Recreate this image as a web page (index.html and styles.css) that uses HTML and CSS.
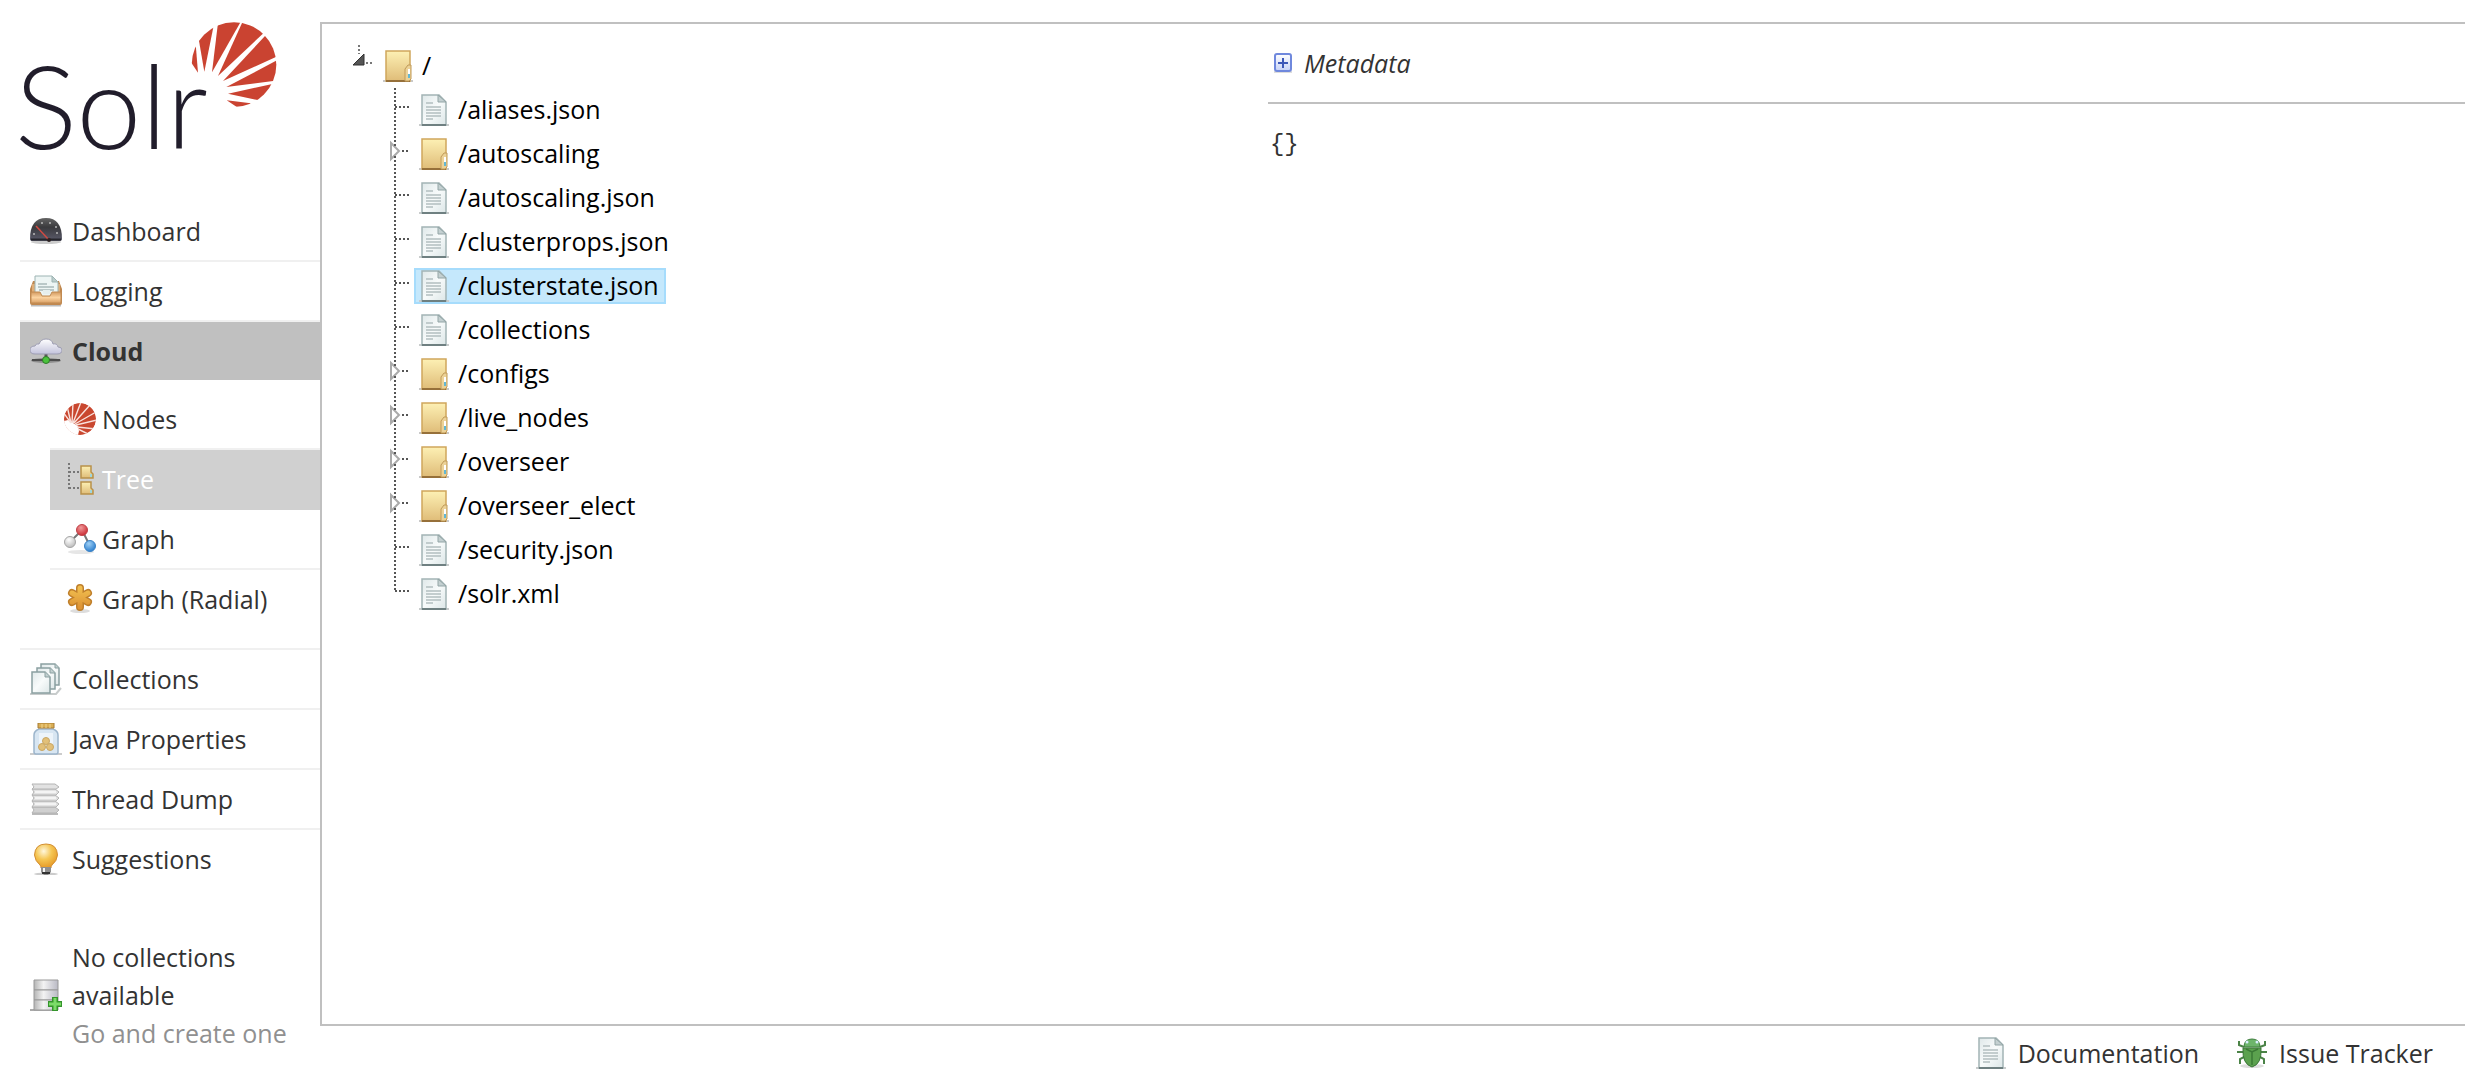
FILE: index.html
```
<!DOCTYPE html>
<html lang="en">
<head>
  <meta charset="utf-8">
  <title>Solr Admin</title>
  <link rel="stylesheet" href="styles.css">
</head>
<body>

  <!-- icon sprite -->
  <svg class="sprite" width="0" height="0" aria-hidden="true">
    <defs>
      <linearGradient id="g-folder" x1="0" y1="0" x2="0" y2="1"><stop offset="0" stop-color="#fdf0b4"/><stop offset="1" stop-color="#dfbc78"/></linearGradient>
      <linearGradient id="g-paper" x1="0" y1="0" x2="1" y2="1"><stop offset="0" stop-color="#dfe8e9"/><stop offset="0.5" stop-color="#f8fbfb"/><stop offset="1" stop-color="#dce6e7"/></linearGradient>
      <linearGradient id="g-gauge" x1="0" y1="0" x2="0" y2="1"><stop offset="0" stop-color="#646464"/><stop offset="0.4" stop-color="#3a3a3d"/><stop offset="1" stop-color="#5b5b6c"/></linearGradient>
      <linearGradient id="g-tray" x1="0" y1="0" x2="0" y2="1"><stop offset="0" stop-color="#d39a60"/><stop offset="0.5" stop-color="#fbd3a0"/><stop offset="1" stop-color="#d9a066"/></linearGradient>
      <linearGradient id="g-cloud" x1="0" y1="0" x2="0" y2="1"><stop offset="0" stop-color="#ffffff"/><stop offset="1" stop-color="#c3c3dc"/></linearGradient>
      <linearGradient id="g-metal" x1="0" y1="0" x2="1" y2="0"><stop offset="0" stop-color="#b4b4b4"/><stop offset="0.4" stop-color="#f3f3f3"/><stop offset="1" stop-color="#b9b9c4"/></linearGradient>
      <linearGradient id="g-star" x1="0" y1="0" x2="0" y2="1"><stop offset="0" stop-color="#f1be4e"/><stop offset="1" stop-color="#dd9436"/></linearGradient>
      <radialGradient id="g-bulb" cx="0.4" cy="0.3" r="0.7"><stop offset="0" stop-color="#fff7dc"/><stop offset="0.5" stop-color="#f5c653"/><stop offset="1" stop-color="#e69a27"/></radialGradient>
      <radialGradient id="g-red" cx="0.4" cy="0.3" r="0.7"><stop offset="0" stop-color="#f09a9a"/><stop offset="1" stop-color="#cc2d35"/></radialGradient>
      <radialGradient id="g-blue" cx="0.4" cy="0.3" r="0.7"><stop offset="0" stop-color="#9fd0f5"/><stop offset="1" stop-color="#2f80cf"/></radialGradient>
      <radialGradient id="g-gray" cx="0.4" cy="0.3" r="0.7"><stop offset="0" stop-color="#ffffff"/><stop offset="1" stop-color="#bdbdbd"/></radialGradient>
      <linearGradient id="g-plus" x1="0" y1="0" x2="0" y2="1"><stop offset="0" stop-color="#ffffff"/><stop offset="1" stop-color="#c6d2f7"/></linearGradient>
      <clipPath id="c-sun"><circle cx="702" cy="192" r="127"/></clipPath>
      <clipPath id="c-sun-small"><circle cx="16" cy="16" r="16"/></clipPath>
    </defs>

    <symbol id="i-sun" viewBox="573 64 258 258">
      <g clip-path="url(#c-sun)" fill="#ca4331">
        <path d="M587 130L594 216L560 165Z"/>
        <path d="M613 213L590 80L645 55Z"/>
        <path d="M636 215L656 50L732 46Z"/>
        <path d="M654 226L736 45L785 45L808 81Z"/>
        <path d="M669 241L814 86L850 100L846 161Z"/>
        <path d="M679 259L848 170L840 238Z"/>
        <path d="M684 279L835 246L840 300L800 304Z"/>
        <path d="M680 299L752 308L740 325L712 320Z"/>
      </g>
    </symbol>

    <symbol id="i-nodes" viewBox="0 0 32 32">
      <g clip-path="url(#c-sun-small)">
        <circle cx="16" cy="16" r="16" fill="#c9472f"/>
        <path d="M0 18L4 17L9 20L14 23L15 28L14 32L0 32Z" fill="#fff"/>
        <path d="M7 20L-1 9M7 20L3 3M8 20L9 0M9 20L17 -1M10 20L26 2M11 21L32 9M12 22L33 17M13 24L32 26M14 26L26 32" stroke="#f8e1dc" stroke-width="1.4" fill="none"/>
      </g>
    </symbol>

    <symbol id="i-dashboard" viewBox="0 0 32 32">
      <ellipse cx="16" cy="27" rx="15" ry="2" fill="#ccc"/>
      <path d="M0 24Q0 3 16 3Q32 3 32 24Q32 26 29 26L3 26Q0 26 0 24Z" fill="url(#g-gauge)"/>
      <path d="M1 24.500H31" stroke="#26262c" stroke-width="2"/>
      <g fill="#b9b9b9"><circle cx="12" cy="8" r="1"/><circle cx="20" cy="8" r="1"/><circle cx="26" cy="12" r="1"/><circle cx="4" cy="19" r="1"/><circle cx="27" cy="18" r="1"/></g>
      <path d="M6 11L19 25" stroke="#d04a42" stroke-width="1.500"/>
      <circle cx="19" cy="25" r="2" fill="#2c2222"/>
    </symbol>

    <symbol id="i-logging" viewBox="0 0 32 32">
      <path d="M1 30.500H31" stroke="#bbb" stroke-width="2"/>
      <path d="M3 6H29L32 14V28Q32 30 30 30H2Q0 30 0 28V14Z" fill="#c08850"/>
      <path d="M2 9H30V20H2Z" fill="#e0ae78"/>
      <path d="M5 1H22L28 7V22H5Z" fill="#edf5f4" stroke="#9db4b3"/>
      <path d="M22 1V7H28Z" fill="#bccdcc" stroke="#9db4b3"/>
      <path d="M8 9H17M8 12H24M9 15H24" stroke="#a9b9b9" stroke-width="1.500"/>
      <path d="M1 17H10L12 21H20L22 17H31V28H1Z" fill="url(#g-tray)" stroke="#c18b52"/>
      <path d="M13 15H20V19H13Z" fill="#e6efee"/>
    </symbol>

    <symbol id="i-cloud" viewBox="0 0 32 32">
      <ellipse cx="16" cy="25.500" rx="15" ry="2.500" fill="#8d8d8d"/>
      <path d="M2 25H30" stroke="#4d4d4d" stroke-width="2"/>
      <path d="M16 18V24" stroke="#555" stroke-width="3"/>
      <path d="M5 19Q0 19 0 15Q0 11 5 11Q6 8 9 9Q11 4 16 4Q22 4 23 9Q27 8 28 12Q32 12 32 15Q32 19 27 19Z" fill="url(#g-cloud)" stroke="#9d9db2"/>
      <circle cx="16" cy="25" r="3.500" fill="#4ac23c" stroke="#2f7a29"/>
    </symbol>

    <symbol id="i-tree" viewBox="0 0 32 32">
      <path d="M5 0V26M5 9H15M5 25H15" stroke="#777" stroke-width="2" stroke-dasharray="2 2" fill="none"/>
      <g fill="url(#g-folder)" stroke="#b8914a" stroke-width="1.500">
        <path d="M17 3H27V9L29 11V15H17Z"/>
        <path d="M17 19H27V25L29 27V31H17Z"/>
      </g>
      <path d="M26 11H28V14H26ZM26 27H28V30H26Z" fill="#9fd6dd"/>
    </symbol>

    <symbol id="i-graph" viewBox="0 0 32 32">
      <ellipse cx="17" cy="29" rx="13" ry="2" fill="#e6e6e6"/>
      <path d="M6 19L18 7L26 23" stroke="#777" stroke-width="2" fill="none"/>
      <circle cx="6" cy="19" r="5.500" fill="url(#g-gray)" stroke="#a5a5a5"/>
      <circle cx="18" cy="7" r="5.500" fill="url(#g-red)" stroke="#c14248"/>
      <circle cx="26" cy="23" r="5.500" fill="url(#g-blue)" stroke="#3c83c6"/>
    </symbol>

    <symbol id="i-radial" viewBox="0 0 32 32">
      <ellipse cx="16" cy="28" rx="10" ry="2" fill="#ddd"/>
      <path d="M16 5V24M8 10L24 19M24 10L8 19" stroke="#bf7f2b" stroke-width="8" stroke-linecap="round"/>
      <path d="M16 5V24M8 10L24 19M24 10L8 19" stroke="url(#g-star)" stroke-width="5" stroke-linecap="round"/>
    </symbol>

    <symbol id="i-collections" viewBox="0 0 32 32">
      <path d="M0 31H26L31 25" stroke="#c8cccc" stroke-width="2" fill="none"/>
      <g fill="url(#g-paper)" stroke="#8ba0a1" stroke-width="1.500">
        <path d="M11 1H25L29 5V22H11Z"/>
        <path d="M7 5H20L25 10V26H7Z"/>
        <path d="M2 9H15L20 14V30H2Z"/>
      </g>
      <path d="M15 9V14H20M20 5V10H25M25 1V5H29" fill="#c2d0d0" stroke="#8ba0a1"/>
    </symbol>

    <symbol id="i-jar" viewBox="0 0 32 32">
      <path d="M0 31H32" stroke="#ccc" stroke-width="2"/>
      <path d="M9 6H23Q28 8 28 12V29Q28 31 26 31H6Q4 31 4 29V12Q4 8 9 6Z" fill="#d8e6f2" stroke="#9cb5cc" stroke-width="1.500"/>
      <path d="M9 10H23V27H9Z" fill="#edf4fa"/>
      <path d="M8 0H24V5H8Z" fill="#d9ae55" stroke="#a87c34"/>
      <path d="M12 1V5M16 1V5M20 1V5" stroke="#f2d68f"/>
      <g fill="#e2c079" stroke="#c9a663"><circle cx="16" cy="18" r="3.500"/><circle cx="12" cy="24" r="3.500"/><circle cx="20" cy="24" r="3.500"/></g>
    </symbol>

    <symbol id="i-threads" viewBox="0 0 32 32">
      <path d="M2 31H28" stroke="#bbb" stroke-width="2"/>
      <g fill="#e2e2e2" stroke="#b4b4b4">
        <path d="M2 24H25L29 27L26 30H2L4 27Z" fill="#d0d0d0"/>
        <path d="M2 18H25L29 21L26 24H2L4 21Z"/>
        <path d="M2 12H25L29 15L26 18H2L4 15Z"/>
        <path d="M2 6H25L29 9L26 12H2L4 9Z"/>
        <path d="M2 1H25L29 4L26 6H2L4 4Z"/>
      </g>
      <path d="M5 21H26M5 15H26M5 9H26" stroke="#f4f4f4" stroke-width="2"/>
    </symbol>

    <symbol id="i-bulb" viewBox="0 0 32 32">
      <ellipse cx="16" cy="31" rx="12" ry="1.500" fill="#ccc"/>
      <path d="M16 1Q27 1 27.500 12Q27 18 22 22Q21 23 21 25H11Q11 23 10 22Q5 18 4.500 12Q5 1 16 1Z" fill="url(#g-bulb)" stroke="#d38f35"/>
      <path d="M11 24H21V29L18 32H14L11 29Z" fill="#8f8f8f"/>
      <path d="M14 25V29" stroke="#f4f4f4" stroke-width="2"/>
      <path d="M12 30H20" stroke="#333" stroke-width="2"/>
    </symbol>

    <symbol id="i-server" viewBox="0 0 32 32">
      <path d="M0 31H28" stroke="#aaa" stroke-width="2"/>
      <g fill="url(#g-metal)" stroke="#999"><path d="M4 1H28V11H4Z"/><path d="M4 11H28V21H4Z"/><path d="M4 21H28V31H4Z"/></g>
      <path d="M25 18V32M18 25H32" stroke="#35952c" stroke-width="6"/>
      <path d="M25 19V31M19 25H31" stroke="#7cdc68" stroke-width="3"/>
    </symbol>

    <symbol id="i-folder" viewBox="0 0 32 32">
      <path d="M1 31H31" stroke="#c9c9c9" stroke-width="2"/>
      <path d="M4 1H28V31H4Z" fill="url(#g-folder)" stroke="#cfa65c" stroke-width="1.500"/>
      <path d="M4 31H28" stroke="#96703a" stroke-width="2"/>
      <path d="M23 31V19L26 15H29V29L27 31Z" fill="#ecd297" stroke="#c09a58"/>
      <path d="M27 19V24" stroke="#fff" stroke-width="2"/>
      <path d="M27 24V28" stroke="#62b7d3" stroke-width="2"/>
    </symbol>

    <symbol id="i-file" viewBox="0 0 32 32">
      <path d="M1 31H31" stroke="#c9cccc" stroke-width="2"/>
      <path d="M4 1H21L28 8V31H4Z" fill="url(#g-paper)" stroke="#a3b4b5" stroke-width="1.500"/>
      <path d="M4 31H28" stroke="#6f8081" stroke-width="2"/>
      <path d="M20 1V8H28Z" fill="#c4d0d1" stroke="#93a5a6"/>
      <path d="M8 9H15M8 13H23M8 16H23M8 19H23M8 22H23M8 25H15" stroke="#b3bfc0" stroke-width="1.500"/>
    </symbol>

    <symbol id="i-bug" viewBox="0 0 32 32">
      <ellipse cx="16" cy="29" rx="12" ry="2" fill="#ddd"/>
      <path d="M8 10L3 8V4M24 10L29 8V4M8 15H1M24 15H31M8 20L4 22V27M24 20L28 22V27" stroke="#4b8347" stroke-width="2" fill="none"/>
      <path d="M7 11H25Q26 27 16 30Q6 27 7 11Z" fill="#5ba14e" stroke="#3b7538"/>
      <path d="M8 10Q8 2 16 2Q24 2 24 10Z" fill="#6db56b" stroke="#417f40"/>
      <path d="M10 12L16 15L22 12M16 15V28" stroke="#3b7a36" stroke-width="1.500" fill="none"/>
      <circle cx="11" cy="5" r="1.500" fill="#d9f0ff"/><circle cx="21" cy="5" r="1.500" fill="#d9f0ff"/>
    </symbol>

    <symbol id="i-expand" viewBox="0 0 20 20">
      <path d="M1 19H19" stroke="#ddd" stroke-width="2"/>
      <rect x="2" y="1" width="16" height="17" rx="2" fill="url(#g-plus)" stroke="#6f88dd" stroke-width="2"/>
      <path d="M5 10H15M10 5V15" stroke="#3d58b8" stroke-width="2"/>
    </symbol>

    <!-- tree lines -->
    <symbol id="t-root" viewBox="0 0 22 44">
      <path d="M7 1V10M14 19H22" stroke="#777" stroke-width="2" stroke-dasharray="2 2"/>
      <path d="M12 10V21H1Z" fill="#555" stroke="#333"/>
    </symbol>
    <symbol id="t-leaf" viewBox="0 0 22 44">
      <path d="M7 0V44M7 19H22" stroke="#555" stroke-width="2" stroke-dasharray="2 2"/>
    </symbol>
    <symbol id="t-closed" viewBox="0 0 22 44">
      <path d="M3 11V27L11 19Z" fill="#fff" stroke="#aaa" stroke-width="2"/>
      <path d="M7 0V14M7 24V44M14 19H22" stroke="#555" stroke-width="2" stroke-dasharray="2 2"/>
    </symbol>
    <symbol id="t-last" viewBox="0 0 22 44">
      <path d="M7 0V20M7 19H22" stroke="#555" stroke-width="2" stroke-dasharray="2 2"/>
    </symbol>
  </svg>

  <div id="sidebar">
    <a href="#" id="logo">
      <span>Solr</span>
      <svg><use href="#i-sun"/></svg>
    </a>

    <ul id="menu">
      <li><a href="#"><svg class="icon"><use href="#i-dashboard"/></svg>Dashboard</a></li>
      <li><a href="#"><svg class="icon"><use href="#i-logging"/></svg>Logging</a></li>
      <li class="active">
        <a href="#"><svg class="icon"><use href="#i-cloud"/></svg>Cloud</a>
        <ul class="submenu">
          <li><a href="#"><svg class="icon"><use href="#i-nodes"/></svg>Nodes</a></li>
          <li class="current"><a href="#"><svg class="icon"><use href="#i-tree"/></svg>Tree</a></li>
          <li><a href="#"><svg class="icon"><use href="#i-graph"/></svg>Graph</a></li>
          <li><a href="#"><svg class="icon"><use href="#i-radial"/></svg>Graph (Radial)</a></li>
        </ul>
      </li>
      <li><a href="#"><svg class="icon"><use href="#i-collections"/></svg>Collections</a></li>
      <li><a href="#"><svg class="icon"><use href="#i-jar"/></svg>Java Properties</a></li>
      <li><a href="#"><svg class="icon"><use href="#i-threads"/></svg>Thread Dump</a></li>
      <li><a href="#"><svg class="icon"><use href="#i-bulb"/></svg>Suggestions</a></li>
    </ul>

    <div id="no-collections">
      <svg class="icon"><use href="#i-server"/></svg>
      <p>No collections available <a href="#">Go and create one</a></p>
    </div>
  </div>

  <div id="wrapper">
    <div id="content">
      <div id="tree">
        <div class="node"><svg class="twig"><use href="#t-root"/></svg><a href="#"><svg class="icon"><use href="#i-folder"/></svg>/</a></div>
        <ul>
          <li class="node"><svg class="twig"><use href="#t-leaf"/></svg><a href="#"><svg class="icon"><use href="#i-file"/></svg>/aliases.json</a></li>
          <li class="node"><svg class="twig"><use href="#t-closed"/></svg><a href="#"><svg class="icon"><use href="#i-folder"/></svg>/autoscaling</a></li>
          <li class="node"><svg class="twig"><use href="#t-leaf"/></svg><a href="#"><svg class="icon"><use href="#i-file"/></svg>/autoscaling.json</a></li>
          <li class="node"><svg class="twig"><use href="#t-leaf"/></svg><a href="#"><svg class="icon"><use href="#i-file"/></svg>/clusterprops.json</a></li>
          <li class="node"><svg class="twig"><use href="#t-leaf"/></svg><a href="#" class="selected"><svg class="icon"><use href="#i-file"/></svg>/clusterstate.json</a></li>
          <li class="node"><svg class="twig"><use href="#t-leaf"/></svg><a href="#"><svg class="icon"><use href="#i-file"/></svg>/collections</a></li>
          <li class="node"><svg class="twig"><use href="#t-closed"/></svg><a href="#"><svg class="icon"><use href="#i-folder"/></svg>/configs</a></li>
          <li class="node"><svg class="twig"><use href="#t-closed"/></svg><a href="#"><svg class="icon"><use href="#i-folder"/></svg>/live_nodes</a></li>
          <li class="node"><svg class="twig"><use href="#t-closed"/></svg><a href="#"><svg class="icon"><use href="#i-folder"/></svg>/overseer</a></li>
          <li class="node"><svg class="twig"><use href="#t-closed"/></svg><a href="#"><svg class="icon"><use href="#i-folder"/></svg>/overseer_elect</a></li>
          <li class="node"><svg class="twig"><use href="#t-leaf"/></svg><a href="#"><svg class="icon"><use href="#i-file"/></svg>/security.json</a></li>
          <li class="node"><svg class="twig"><use href="#t-last"/></svg><a href="#"><svg class="icon"><use href="#i-file"/></svg>/solr.xml</a></li>
        </ul>
      </div>

      <div id="file">
        <a href="#" class="metadata"><svg><use href="#i-expand"/></svg>Metadata</a>
        <pre>{}</pre>
      </div>
    </div>

    <div id="footer">
      <a href="#"><svg class="icon"><use href="#i-file"/></svg>Documentation</a>
      <a href="#"><svg class="icon"><use href="#i-bug"/></svg>Issue Tracker</a>
    </div>
  </div>

</body>
</html>
```
FILE: styles.css
```
* {
  box-sizing: border-box;
}

body {
  display: flex;
  min-height: 100vh;
  margin: 0;
  background-color: #fff;
  color: #333;
  font-family: "Open Sans", "Noto Sans", sans-serif;
  font-size: 25px;
  line-height: 38px;
}

ul {
  list-style: none;
  margin: 0;
  padding: 0;
}

a {
  color: #333;
  text-decoration: none;
}

.sprite {
  position: absolute;
}

.icon {
  flex: none;
  width: 32px;
  height: 32px;
}

#sidebar {
  flex: none;
  width: 320px;
  padding: 22px 0 0 20px;
}

/* logo */

#logo {
  display: flex;
  height: 180px;
  margin-left: -5px;
  color: #211d2b;
}

#logo span {
  width: 176px;
  font-family: Lato, sans-serif;
  font-size: 116px;
  font-weight: 300;
  line-height: 166px;
}

#logo svg {
  width: 86px;
  height: 86px;
}

/* menu */

#menu a {
  display: flex;
  align-items: center;
  gap: 10px;
  height: 58px;
  padding-left: 10px;
}

#menu li + li {
  border-top: 2px solid #f0f0f0;
}

#menu .active > a {
  background-color: #c0c0c0;
  font-weight: bold;
}

#menu .submenu {
  margin: 10px 0 20px 30px;
}

#menu .submenu a {
  gap: 6px;
  padding-left: 14px;
}

#menu .submenu .current {
  border-bottom: 2px solid #d0d0d0;
}

#menu .submenu .current a {
  background-color: #d0d0d0;
  color: #fff;
}

#menu .submenu .current + li {
  border-top: none;
}

#no-collections {
  display: flex;
  align-items: center;
  gap: 10px;
  margin-top: 50px;
  padding-left: 10px;
}

#no-collections p {
  margin: 0;
}

#no-collections a {
  display: block;
  color: #909090;
}

/* content */

#wrapper {
  display: flex;
  flex: 1;
  flex-direction: column;
  padding-top: 22px;
}

#content {
  display: grid;
  flex: 1;
  grid-template-columns: 44% 1fr;
  border: 2px solid #c0c0c0;
  border-right: none;
}

#tree {
  padding: 20px 30px;
}

#tree ul {
  padding-left: 36px;
}

.node {
  display: flex;
  align-items: center;
  gap: 4px;
  height: 44px;
}

.twig {
  flex: none;
  width: 22px;
  height: 44px;
}

.node a {
  display: flex;
  align-items: flex-start;
  gap: 8px;
  height: 36px;
  padding: 0 5px 0 2px;
  border: 2px solid transparent;
  color: #000;
  line-height: 30px;
}

.node a.selected {
  border-color: #a6dcfc;
  background-color: #c5e8fc;
}

#file {
  padding-left: 3px;
}

.metadata {
  display: flex;
  align-items: center;
  gap: 11px;
  height: 80px;
  padding-left: 5px;
  border-bottom: 2px solid #c0c0c0;
  font-style: italic;
}

.metadata svg {
  width: 20px;
  height: 20px;
}

#file pre {
  margin: 22px 2px;
  font-family: "Liberation Mono", monospace;
  font-size: 24px;
}

/* footer */

#footer {
  display: flex;
  align-items: flex-start;
  justify-content: flex-end;
  gap: 37px;
  height: 58px;
  padding: 10px 32px 0 0;
}

#footer a {
  display: flex;
  align-items: center;
  gap: 11px;
  line-height: 34px;
}
```
